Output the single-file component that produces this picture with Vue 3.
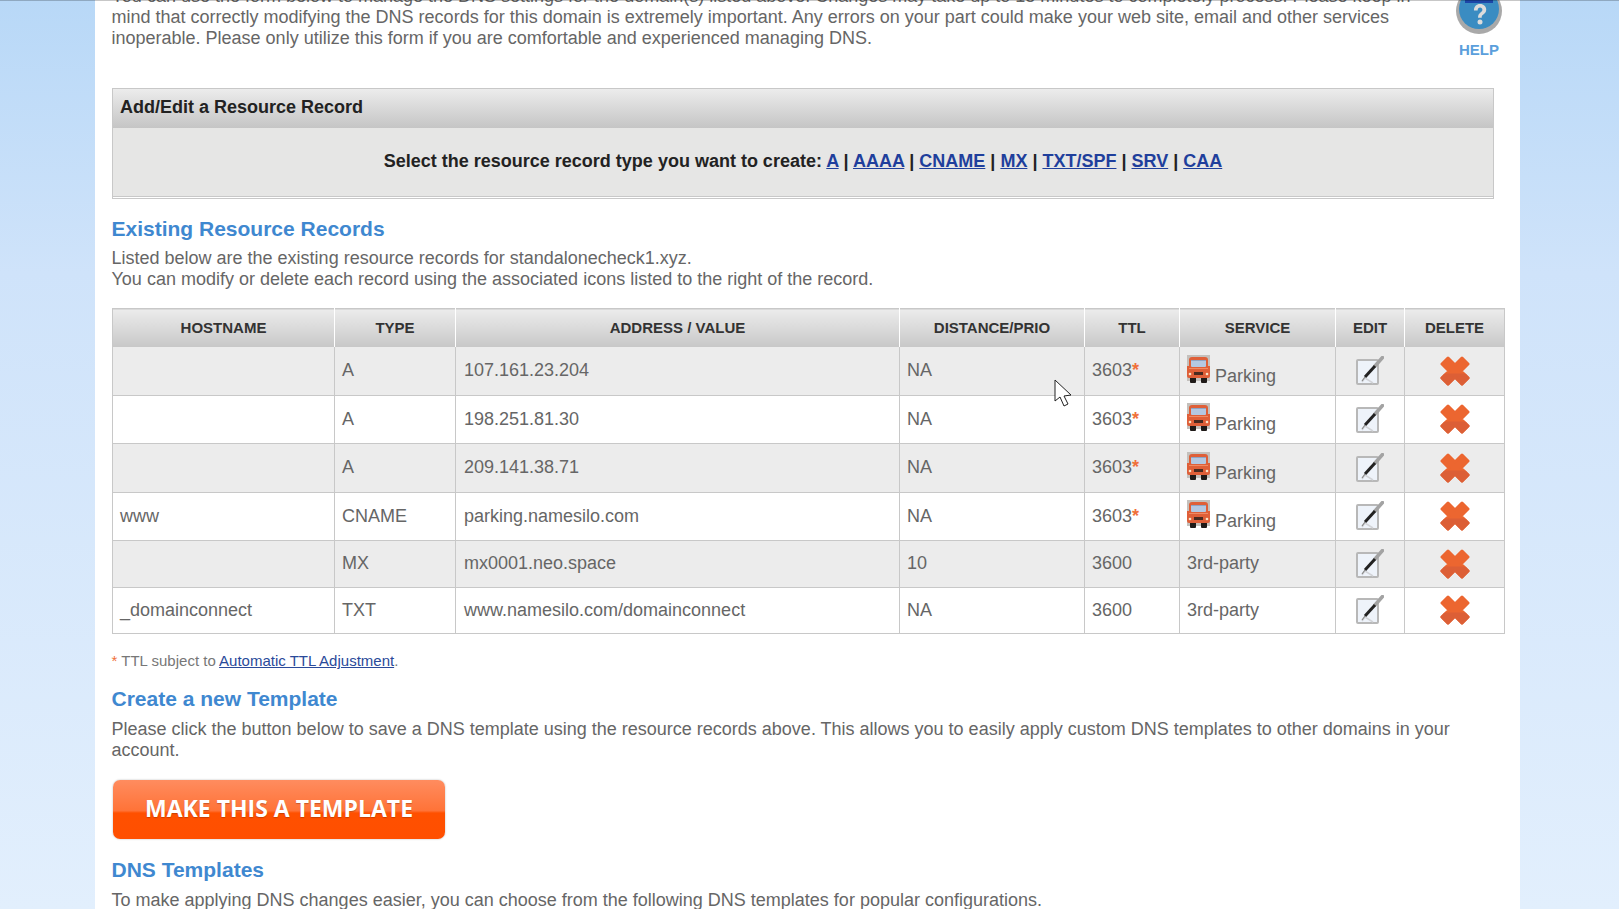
<script setup>
const recordTypes = ['A', 'AAAA', 'CNAME', 'MX', 'TXT/SPF', 'SRV', 'CAA']

const columns = [
  { label: 'HOSTNAME', width: 222 },
  { label: 'TYPE', width: 121 },
  { label: 'ADDRESS / VALUE', width: 444 },
  { label: 'DISTANCE/PRIO', width: 185 },
  { label: 'TTL', width: 95 },
  { label: 'SERVICE', width: 156 },
  { label: 'EDIT', width: 69 },
  { label: 'DELETE', width: 100 }
]

const records = [
  { host: '', type: 'A', value: '107.161.23.204', prio: 'NA', ttl: '3603', parking: true, height: 49 },
  { host: '', type: 'A', value: '198.251.81.30', prio: 'NA', ttl: '3603', parking: true, height: 48 },
  { host: '', type: 'A', value: '209.141.38.71', prio: 'NA', ttl: '3603', parking: true, height: 49 },
  { host: 'www', type: 'CNAME', value: 'parking.namesilo.com', prio: 'NA', ttl: '3603', parking: true, height: 48 },
  { host: '', type: 'MX', value: 'mx0001.neo.space', prio: '10', ttl: '3600', parking: false, height: 47 },
  { host: '_domainconnect', type: 'TXT', value: 'www.namesilo.com/domainconnect', prio: 'NA', ttl: '3600', parking: false, height: 46 }
]
</script>

<template>
  <div class="page">
    <div class="sheet">
      <div class="intro-row">
        <p class="intro">
          You can use the form below to manage the DNS settings for the domain(s) listed above. Changes may take up to 15 minutes to completely process. Please keep in
          mind that correctly modifying the DNS records for this domain is extremely important. Any errors on your part could make your web site, email and other services
          inoperable. Please only utilize this form if you are comfortable and experienced managing DNS.
        </p>
        <a class="help">
          <svg class="help-icon" width="48" height="48" viewBox="0 0 48 48">
            <circle cx="24" cy="24" r="23" fill="#a9a9a9" />
            <circle cx="24" cy="22" r="20" fill="#3a8cc2" />
            <rect x="10" y="13" width="28" height="3" fill="#1c46a8" />
            <g transform="translate(5 9.500) scale(0.82)">
              <path d="M17 17c0-5 3-8 7.500-8s7.500 3 7.500 7c0 3-1.500 4.500-3.500 6s-2 2-2 4h-4.500c0-3 .5-4.500 3-6.500 1.500-1.200 2.300-2 2.300-3.300 0-1.500-1.200-2.700-2.800-2.700-1.800 0-3 1.300-3 3.500z" fill="#dcdcdc" />
            </g>
            <circle cx="25" cy="35" r="2.500" fill="#dcdcdc" />
          </svg>
          <span>HELP</span>
        </a>
      </div>

      <section class="panel">
        <h3 class="panel-title">Add/Edit a Resource Record</h3>
        <div class="panel-body">
          Select the resource record type you want to create:
          <template v-for="(type, i) in recordTypes" :key="type">
            <a class="link">{{ type }}</a><template v-if="i < recordTypes.length - 1"> | </template>
          </template>
        </div>
      </section>

      <h2 class="heading existing">Existing Resource Records</h2>
      <p class="copy">
        Listed below are the existing resource records for standalonecheck1.xyz.<br />
        You can modify or delete each record using the associated icons listed to the right of the record.
      </p>

      <table class="records">
        <colgroup>
          <col v-for="col in columns" :key="col.label" :style="{ width: col.width + 'px' }" />
        </colgroup>
        <thead>
          <tr>
            <th v-for="col in columns" :key="col.label">{{ col.label }}</th>
          </tr>
        </thead>
        <tbody>
          <tr v-for="(row, i) in records" :key="i" :style="{ height: row.height + 'px' }">
            <td>{{ row.host }}</td>
            <td>{{ row.type }}</td>
            <td class="value-cell">{{ row.value }}</td>
            <td>{{ row.prio }}</td>
            <td>{{ row.ttl }}<span v-if="row.parking" class="star">*</span></td>
            <td>
              <template v-if="row.parking">
                <svg class="truck" width="23" height="28" viewBox="0 0 23 28">
                  <rect width="23" height="26" fill="#c4c0bc" />
                  <rect x="3" y="21" width="6" height="7" rx="1" fill="#1f1a18" />
                  <rect x="14" y="21" width="6" height="7" rx="1" fill="#1f1a18" />
                  <path d="M2 5q0-3 3-3h13q3 0 3 3v6h2v10q0 2-2 2H2q-2 0-2-2V11h2z" fill="#df5f38" />
                  <rect x="4" y="5" width="15" height="7" rx="1" fill="#b4c8e2" />
                  <rect x="4" y="5" width="15" height="1" fill="#8ea4c4" />
                  <rect x="2" y="13" width="19" height="1" fill="#f08a63" />
                  <rect x="7" y="17" width="9" height="3" fill="#4a2a20" />
                  <circle cx="3" cy="19" r="1.300" fill="#f7e3c8" />
                  <circle cx="20" cy="19" r="1.300" fill="#f7e3c8" />
                </svg>
                Parking
              </template>
              <template v-else>3rd-party</template>
            </td>
            <td class="icon-cell">
              <svg width="28" height="30" viewBox="0 0 28 30">
                <rect x="1" y="4" width="21" height="24" rx="1" fill="#eef3fa" stroke="#b8b8b8" stroke-width="2" />
                <path d="M6 26l3-4 8 5" fill="none" stroke="#d2d4d8" stroke-width="1.500" />
                <path d="M26.500 1.500L19 10" stroke="#a3a3a3" stroke-width="3.500" stroke-linecap="round" />
                <path d="M19 10L9 21" stroke="#222" stroke-width="3" />
                <path d="M9 21l-3 4" stroke="#888" stroke-width="1.200" />
              </svg>
            </td>
            <td class="icon-cell">
              <svg width="30" height="30" viewBox="0 0 30 30">
                <path d="M8 2L15 9 22 2 28 8 21 15 28 22 22 28 15 21 8 28 2 22 9 15 2 8z" fill="#ec6630" stroke="#ec6630" stroke-width="3" stroke-linejoin="round" />
                <path d="M5 19H25L28 22 22 28 15 21 8 28 2 22z" fill="#dc5f36" stroke="#dc5f36" stroke-width="3" stroke-linejoin="round" />
              </svg>
            </td>
          </tr>
        </tbody>
      </table>

      <p class="note"><span class="star">*</span> TTL subject to <a class="note-link">Automatic TTL Adjustment</a>.</p>

      <h2 class="heading create">Create a new Template</h2>
      <p class="copy copy-wide">
        Please click the button below to save a DNS template using the resource records above. This allows you to easily apply custom DNS templates to other domains in your account.
      </p>

      <a class="make-btn">MAKE THIS A TEMPLATE</a>

      <h2 class="heading templates">DNS Templates</h2>
      <p class="copy copy-wide">To make applying DNS changes easier, you can choose from the following DNS templates for popular configurations.</p>
    </div>

    <div class="top-line"></div>
    <svg class="cursor" width="20" height="28" viewBox="0 0 20 28">
      <path d="M1 1v21l5-4 4 9 4-2-4-8 7-1z" fill="#fff" stroke="#222" stroke-width="1" stroke-linejoin="miter" />
    </svg>
  </div>
</template>

<style scoped>
.page {
  position: relative;
  width: 1619px;
  height: 909px;
  overflow: hidden;
  background: linear-gradient(180deg, #b8d8f7 0%, #cfe3fa 30%, #e2effd 100%);
  font-family: "Liberation Sans", Arial, sans-serif;
  font-size: 18px;
  line-height: 21px;
  color: #666;
}

.sheet {
  width: 1425px;
  margin-left: 95px;
  padding: 0 15px 0 16.500px;
  box-sizing: border-box;
  background: #fff;
  height: 909px;
  overflow: hidden;
}

.intro-row {
  display: flex;
  justify-content: space-between;
  margin-top: -14px;
}

.intro {
  margin: 0;
  width: 1311px;
}

.help {
  display: flex;
  flex-direction: column;
  align-items: center;
  width: 48px;
  margin-right: 2px;
  color: #5b9fdc;
  font-size: 15px;
  font-weight: bold;
  line-height: 16px;
}

.help-icon {
  margin-top: 1px;
  margin-bottom: 7px;
}

.panel {
  width: 1382px;
  margin: 30px 0 0 0.500px;
  border: 1px solid #c8c8c8;
  box-sizing: border-box;
}

.panel-title {
  margin: 0;
  height: 39px;
  padding-left: 7px;
  background: linear-gradient(180deg, #ececec, #c5c5c5);
  font-size: 18px;
  line-height: 37px;
  color: #222;
}

.panel-body {
  height: 69px;
  padding-top: 23px;
  box-sizing: border-box;
  margin-bottom: 1px;
  border-bottom: 1px solid #c8c8c8;
  background: #e6e6e5;
  text-align: center;
  font-weight: bold;
  color: #222;
}

.link {
  color: #1f3f9c;
  text-decoration: underline;
}

.heading {
  margin: 0;
  font-size: 21px;
  line-height: 24px;
  font-weight: bold;
  color: #3f88d0;
}

.existing {
  margin-top: 18px;
}

.create {
  margin-top: 16px;
}

.templates {
  margin-top: 19px;
}

.copy {
  margin: 7px 0 0;
}

.copy-wide {
  margin-top: 8px;
}

.records {
  width: 1392px;
  margin: 18px 0 0 0.500px;
  border-collapse: collapse;
  table-layout: fixed;
}

.records th {
  height: 37px;
  padding: 0;
  background: linear-gradient(180deg, #ececec, #c8c8c8);
  border-top: 1px solid #c8c8c8;
  border-left: 1px solid #fff;
  border-right: 1px solid #fff;
  font-size: 15px;
  color: #333;
  text-align: center;
}

.records th:first-child {
  border-left-color: #c8c8c8;
}

.records th:last-child {
  border-right-color: #c8c8c8;
}

.records td {
  padding: 0 7px 1px;
  border: 1px solid #c8c8c8;
  overflow: hidden;
  white-space: nowrap;
}

.records td.value-cell {
  padding-left: 8px;
}

.records tbody tr:nth-child(odd) td {
  background: #ececec;
}

.truck {
  vertical-align: -1px;
}

.icon-cell {
  text-align: center;
}

.icon-cell svg {
  display: block;
  margin: 0 auto;
}

.star {
  color: #f0703a;
  font-weight: bold;
}

.note {
  margin: 16px 0 0;
  font-size: 15px;
  color: #777;
}

.note .star {
  font-weight: normal;
}

.note-link {
  color: #2a4a9a;
  text-decoration: underline;
}

.make-btn {
  display: block;
  width: 332px;
  height: 59px;
  margin: 19px 0 0 1.500px;
  border-radius: 7px;
  background: linear-gradient(180deg, #ff8c5f 0%, #ff7338 52%, #ff5000 56%, #ff4f00 100%);
  box-shadow: 0 0 2px rgba(0, 0, 0, 0.3);
  color: #fff;
  font-family: "Open Sans", sans-serif;
  font-size: 23px;
  font-weight: 700;
  line-height: 57px;
  text-align: center;
  text-shadow: 0 1px 1px rgba(120, 40, 0, 0.4);
}

.top-line {
  position: absolute;
  top: 0;
  left: 0;
  right: 0;
  height: 1px;
  background: rgba(0, 0, 0, 0.22);
}

.cursor {
  position: absolute;
  left: 1054px;
  top: 379px;
}
</style>

<style>
body {
  overflow: hidden;
}
</style>
